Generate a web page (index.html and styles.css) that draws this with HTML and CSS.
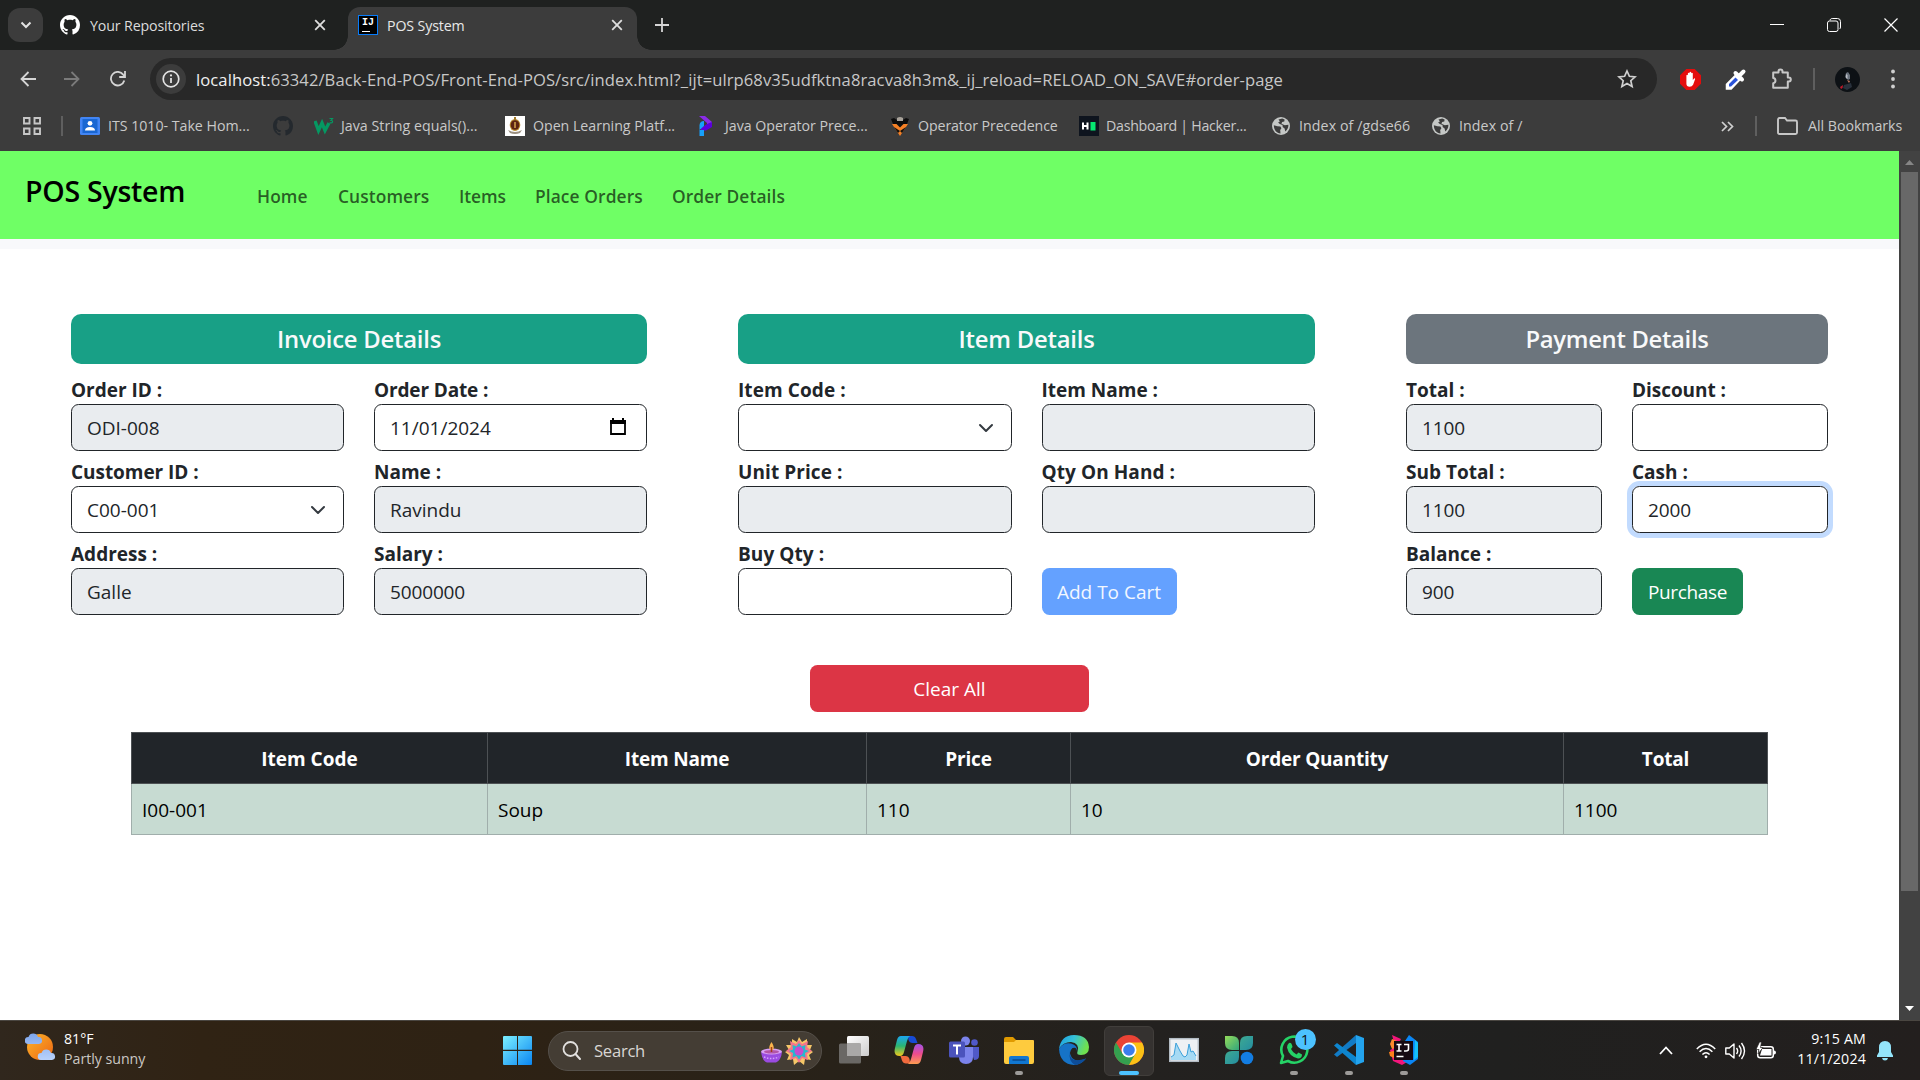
FILE: index.html
```html
<!DOCTYPE html>
<html lang="en">
<head>
<meta charset="utf-8">
<title>POS System</title>
<link rel="stylesheet" href="styles.css">
</head>
<body>
<svg class="defs" width="0" height="0">
  <defs>
    <symbol id="github" viewBox="0 0 16 16"><path d="M8 0C3.58 0 0 3.58 0 8c0 3.54 2.29 6.53 5.47 7.59.4.07.55-.17.55-.38 0-.19-.01-.82-.01-1.49-2.01.37-2.53-.49-2.69-.94-.09-.23-.48-.94-.82-1.13-.28-.15-.68-.52-.01-.53.63-.01 1.08.58 1.23.82.72 1.21 1.87.87 2.33.66.07-.52.28-.87.51-1.07-1.78-.2-3.64-.89-3.64-3.95 0-.87.31-1.59.82-2.15-.08-.2-.36-1.02.08-2.12 0 0 .67-.21 2.2.82.64-.18 1.32-.27 2-.27s1.36.09 2 .27c1.53-1.04 2.2-.82 2.2-.82.44 1.1.16 1.92.08 2.12.51.56.82 1.27.82 2.15 0 3.07-1.87 3.75-3.65 3.95.29.25.54.73.54 1.48 0 1.07-.01 1.93-.01 2.2 0 .21.15.46.55.38A8.01 8.01 0 0 0 16 8c0-4.42-3.58-8-8-8z"/></symbol>
    <symbol id="close" viewBox="0 0 12 12"><path d="M1.2 1.2l9.6 9.6M10.8 1.2l-9.6 9.6" fill="none" stroke="currentColor" stroke-width="1.8"/></symbol>
    <symbol id="globe" viewBox="0 0 20 20"><circle cx="10" cy="10" r="9" fill="#c4c7c5"/><path d="M2.8 9.2l3.6 1.1 3 .2 1 1.8-1.2 1.6.3 3.5c-3.800-.3-6.500-3-6.700-8.200zM7.500 3.400l3.700-.9 2.400 1-.3 1.900-2.200.7-.6 1.600 3.300 1.500 3.600-.5c.1 3.200-1.300 5.300-3.100 6.700l-.7-3-1.900-1.400-.2-2-2.700-.9-1.700-1.600 1.800-1.100z" fill="#3c3c3c"/></symbol>
    <symbol id="chev" viewBox="0 0 16 16"><path d="M2 5l6 6 6-6" fill="none" stroke="#343a40" stroke-width="2" stroke-linecap="round" stroke-linejoin="round"/></symbol>
  </defs>
</svg>

<header class="browser">
  <div class="tabstrip">
    <div class="tab-search"><svg width="12" height="8" viewBox="0 0 12 8"><path d="M1.500 1.500L6 6l4.500-4.500" fill="none" stroke="#e3e3e3" stroke-width="2"/></svg></div>
    <div class="tab">
      <svg class="fav" fill="#fff"><use href="#github"/></svg>
      <span class="tab-title">Your Repositories</span>
      <svg class="x"><use href="#close"/></svg>
    </div>
    <div class="tab active">
      <span class="fav ij"><b>IJ</b></span>
      <span class="tab-title">POS System</span>
      <svg class="x"><use href="#close"/></svg>
    </div>
    <svg class="plus" width="14" height="14" viewBox="0 0 14 14"><path d="M7 0v14M0 7h14" stroke="#d5d5d5" stroke-width="1.800"/></svg>
    <div class="winctl">
      <svg width="14" height="14" viewBox="0 0 14 14"><path d="M0 6.500h14" stroke="#fff"/></svg>
      <svg width="14" height="14" viewBox="0 0 14 14" fill="none" stroke="#fff"><rect x=".5" y="3" width="10.500" height="10.500" rx="2"/><path d="M3 2.500C3.200 1.200 4 .5 5.200.5H10.500Q13.500.5 13.500 3.500V9Q13.500 10.500 12.500 11"/></svg>
      <svg width="14" height="14" viewBox="0 0 14 14"><path d="M.5.5l13 13M13.500.5l-13 13" stroke="#fff" stroke-width="1.200"/></svg>
    </div>
  </div>

  <div class="toolbar">
    <svg class="back" width="16" height="16" viewBox="0 0 16 16"><path d="M8.500 1L1.500 8l7 7M2 8h14" fill="none" stroke="#d5d5d5" stroke-width="1.800"/></svg>
    <svg class="fwd" width="16" height="16" viewBox="0 0 16 16"><path d="M7.500 1l7 7-7 7M14 8H0" fill="none" stroke="#7b7b7b" stroke-width="1.800"/></svg>
    <svg class="reload" width="16" height="16" viewBox="0 0 16 16"><path d="M14.300 9.500A6.800 6.800 0 1 1 13.200 3.600L15 5.500M15 0v6H9.200" fill="none" stroke="#d5d5d5" stroke-width="1.800"/></svg>
    <div class="omnibox">
      <span class="info"><svg width="18" height="18" viewBox="0 0 18 18"><circle cx="9" cy="9" r="7.800" fill="none" stroke="#e3e3e3" stroke-width="1.700"/><path d="M9 8v5" stroke="#e3e3e3" stroke-width="1.800"/><circle cx="9" cy="5.400" r="1.100" fill="#e3e3e3"/></svg></span>
      <span class="url"><em>localhost:</em>63342/Back-End-POS/Front-End-POS/src/index.html?_ijt=ulrp68v35udfktna8racva8h3m&amp;_ij_reload=RELOAD_ON_SAVE#order-page</span>
      <svg width="20" height="20" viewBox="0 0 20 20"><path d="M10 2l2.400 5.300 5.700.6-4.300 3.800 1.300 5.700L10 14.400l-5.100 3 1.300-5.700L1.900 7.900l5.700-.6z" fill="none" stroke="#d0d0d0" stroke-width="1.700"/></svg>
    </div>
    <svg class="adblock" width="21" height="21" viewBox="0 0 21 21"><path d="M6.300 0h8.400L21 6.300v8.400L14.700 21H6.300L0 14.700V6.300z" fill="#e40d0d"/><path d="M6.400 12.500V6.300q.8-1 1.500 0V9V4.200q.8-1 1.600 0V8.500V3.200q.9-1 1.700 0V8.500V4.200q.8-1 1.600 0V11l1.300-1.600q1.200-.2 1 .8l-2 5.500q-1 2-3.400 2-3.300 0-3.300-3z" fill="#fff"/></svg>
    <svg class="pipette" width="22" height="22" viewBox="0 0 22 22"><path d="M12.500 6L2 16.500V20.500H6L16 10" fill="#fff" stroke="#fff" stroke-width="2.500"/><path d="M10.500 9.500L4 16v2.500h2L13 12z" fill="#2952d9"/><path d="M10.500 5l6.500 6.500M14 8l4.500-4.500" stroke="#fff" stroke-width="4" stroke-linecap="round"/></svg>
    <svg class="puzzle" width="22" height="22" viewBox="0 0 22 22"><path d="M2.200 4.500H7.500V3.500a2 2 0 0 1 4 0v1h5.300v5h1a2 2 0 0 1 0 4h-1v6.300H2.200v-4.600c3-.3 3-5 0-5.300z" fill="none" stroke="#c7c7c7" stroke-width="2" stroke-linejoin="round"/></svg>
    <i class="sep"></i>
    <svg class="avatar" width="25" height="25" viewBox="0 0 25 25"><circle cx="12.500" cy="12.500" r="12.500" fill="#0d1115"/><path d="M11 6l2-1 2 3v4l-2 1-3-3z" fill="#68717c"/><path d="M11 7l1.500 1v4l-1.500-1z" fill="#b9bec5"/><path d="M12 13l3 1-1 2z" fill="#c27a62"/><path d="M9 18l7-2 1 4-5 3-4-2z" fill="#29313c"/><path d="M5 20l3-2-.5 3-1.500 1z" fill="#c3182a"/></svg>
    <svg class="dots" width="4" height="20" viewBox="0 0 4 20" fill="#d0d0d0"><circle cx="2" cy="2.500" r="1.900"/><circle cx="2" cy="10" r="1.900"/><circle cx="2" cy="17.500" r="1.900"/></svg>
  </div>

  <div class="bookmarks">
    <svg class="apps" width="18" height="18" viewBox="0 0 18 18" fill="none" stroke="#c7c7c7" stroke-width="1.900"><path d="M1 1h5.500v5.500H1zM11.500 1H17v5.500h-5.500zM1 11.500h5.500V17H1zM11.500 11.500H17V17h-5.500z"/></svg>
    <i class="sep"></i>
    <div class="marks">
      <div class="mark"><svg class="fav" viewBox="0 0 20 20"><rect y="1" width="20" height="18" rx="1.500" fill="#4285f4"/><rect x="2.500" y="3" width="15" height="14" fill="#1967d2"/><circle cx="10" cy="7.300" r="2.400" fill="#fff"/><path d="M5 14.500q0-3.500 5-3.500t5 3.500z" fill="#fff"/></svg><span>ITS 1010- Take Hom...</span></div>
      <div class="mark"><svg class="fav" fill="#24292e"><use href="#github"/></svg></div>
      <div class="mark w3"><svg class="fav" viewBox="0 0 20 20" fill="none" stroke="#059862"><path d="M1 5l3.500 9.500L8 7l3 7.500L15 7" stroke-width="3.400"/><path d="M15.500 2.500h3l-1.500 2q2 0 1.500 1.500t-3 .7" stroke-width="1.200"/></svg><span>Java String equals()...</span></div>
      <div class="mark"><svg class="fav" viewBox="0 0 20 20"><path fill="#fff" d="M0 0h20v20H0z"/><ellipse cx="10" cy="9" rx="5.300" ry="6" fill="#b98b2e"/><ellipse cx="10" cy="9" rx="4.300" ry="4.800" fill="#5d2413"/><path d="M9 6h2v6H9z" fill="#b5853f"/><path d="M9 1h2v3H9z" fill="#a47b2a"/><path d="M3 14q7 4 14 0l-2 3q-5 2-10 0z" fill="#9a8f80"/></svg><span>Open Learning Platf...</span></div>
      <div class="mark"><svg class="fav" viewBox="0 0 20 20"><path d="M2 0h6l7 6-1 4-4 1V7z" fill="#8a2be8"/><path d="M10 8l5-2v5L9 14.500H4V12z" fill="#5b00dc"/><path d="M2.500 9Q3 5 7 5v5l-4.500 4zM2.500 14H7v6H2.500z" fill="#18a0fb"/></svg><span>Java Operator Prece...</span></div>
      <div class="mark"><svg class="fav" viewBox="0 0 20 20"><path d="M1 3l3-1 3 2h6l3-2 3 1-2 5H3z" fill="#0c0c0c"/><path d="M7 2q3-2 6 0v3H7z" fill="#a8a29a"/><path d="M2 8h16l-8 12z" fill="#f58025"/><path d="M6.500 8h7L10 11.500zM4 11l6 4-2 2zM16 11l-6 4 2 2z" fill="#111"/></svg><span class="snug">Operator Precedence</span></div>
      <div class="mark hr"><svg class="fav" viewBox="0 0 20 20"><path fill="#0e141e" d="M0 0h20v20H0z"/><path d="M4 6.500v7M8.500 6.500v7M4 10h5" stroke="#fff" stroke-width="2"/><path d="M11.500 6h5v8.500h-5z" fill="#05e770"/></svg><span>Dashboard | Hacker...</span></div>
      <div class="mark"><svg class="fav"><use href="#globe"/></svg><span class="wide">Index of /gdse66</span></div>
      <div class="mark"><svg class="fav"><use href="#globe"/></svg><span class="wide">Index of /</span></div>
    </div>
    <svg class="more" width="13" height="11" viewBox="0 0 13 11"><path d="M1 1l4.500 4.500L1 10M7 1l4.500 4.500L7 10" fill="none" stroke="#d0d0d0" stroke-width="1.700"/></svg>
    <i class="sep"></i>
    <svg class="folder" width="21" height="18" viewBox="0 0 21 18"><path d="M1 3q0-2 1.500-2H8l2 2.500h8.500q1.500 0 1.500 1.500v10.500q0 1.500-1.500 1.500h-16Q1 17 1 15.500z" fill="none" stroke="#c7c7c7" stroke-width="1.900"/></svg>
    <span>All Bookmarks</span>
  </div>
</header>

<div class="viewport">
  <main class="page">
    <nav class="navbar">
      <h1>POS System</h1>
      <ul>
        <li class="n1">Home</li><li class="n2">Customers</li><li class="n3">Items</li><li class="n4">Place Orders</li><li class="n5">Order Details</li>
      </ul>
    </nav>
    <div class="strip"></div>

    <section class="panels">
      <div class="panel">
        <h2>Invoice Details</h2>
        <div class="fields">
          <div class="field"><label>Order ID :</label><div class="input ro">ODI-008</div></div>
          <div class="field"><label class="tight">Order Date :</label><div class="input date">11/01/2024<svg width="18" height="18" viewBox="0 0 18 18"><path d="M4 0v3M14 0v3" stroke="#000" stroke-width="2"/><path d="M2 3h14v13H2z" fill="none" stroke="#000" stroke-width="1.800"/><path d="M1 2h16v4H1z"/></svg></div></div>
          <div class="field"><label class="near">Customer ID :</label><div class="input select">C00-001<svg><use href="#chev"/></svg></div></div>
          <div class="field"><label>Name :</label><div class="input ro">Ravindu</div></div>
          <div class="field"><label>Address :</label><div class="input ro">Galle</div></div>
          <div class="field"><label>Salary :</label><div class="input ro tight">5000000</div></div>
        </div>
      </div>
      <div class="panel">
        <h2>Item Details</h2>
        <div class="fields">
          <div class="field"><label class="wide">Item Code :</label><div class="input select"><svg><use href="#chev"/></svg></div></div>
          <div class="field"><label>Item Name :</label><div class="input ro"></div></div>
          <div class="field"><label class="wide">Unit Price :</label><div class="input ro"></div></div>
          <div class="field"><label class="wide">Qty On Hand :</label><div class="input ro"></div></div>
          <div class="field"><label class="wide">Buy Qty :</label><div class="input"></div></div>
          <div class="field"><button class="btn add">Add To Cart</button></div>
        </div>
      </div>
      <div class="panel pay">
        <h2>Payment Details</h2>
        <div class="fields">
          <div class="field"><label>Total :</label><div class="input ro tight">1100</div></div>
          <div class="field"><label class="near">Discount :</label><div class="input"></div></div>
          <div class="field"><label>Sub Total :</label><div class="input ro tight">1100</div></div>
          <div class="field"><label>Cash :</label><div class="input focus tight">2000</div></div>
          <div class="field"><label>Balance :</label><div class="input ro tight">900</div></div>
          <div class="field"><button class="btn buy">Purchase</button></div>
        </div>
      </div>
    </section>

    <button class="btn clear">Clear All</button>

    <table class="cart">
      <colgroup><col class="c1"><col class="c2"><col class="c3"><col class="c4"><col class="c5"></colgroup>
      <thead><tr><th class="code">Item Code</th><th>Item Name</th><th>Price</th><th>Order Quantity</th><th>Total</th></tr></thead>
      <tbody><tr><td>I00-001</td><td>Soup</td><td>110</td><td>10</td><td>1100</td></tr></tbody>
    </table>
  </main>
  <aside class="scrollbar">
    <svg width="9" height="5" viewBox="0 0 9 5"><path d="M0 5L4.500 0 9 5z" fill="#868686"/></svg>
    <div class="thumb"></div>
    <svg width="9" height="5" viewBox="0 0 9 5"><path d="M0 0l4.500 5L9 0z" fill="#fff"/></svg>
  </aside>
</div>

<footer class="taskbar">
  <div class="weather">
    <svg width="31" height="30" viewBox="0 0 31 30">
      <defs>
        <linearGradient id="sun" x1="0" y1="0" x2="1" y2="1"><stop offset="0" stop-color="#fbb52a"/><stop offset="1" stop-color="#ee6512"/></linearGradient>
        <linearGradient id="cloud" x1="0" y1="0" x2="0" y2="1"><stop offset="0" stop-color="#7ea6ec"/><stop offset="1" stop-color="#b9d2fb"/></linearGradient>
      </defs>
      <circle cx="15" cy="15" r="13" fill="url(#sun)"/>
      <path d="M3 12a3.500 3.500 0 0 1 .5-7 5 5 0 0 1 9.500 0 3.500 3.500 0 0 1 1 7zM16 28a3.500 3.500 0 0 1 .500-7 5 5 0 0 1 9.500 0 3.500 3.500 0 0 1 1 7z" fill="url(#cloud)"/>
    </svg>
    <div><p>81°F</p><p class="dim">Partly sunny</p></div>
  </div>

  <div class="apps-row">
    <svg class="start" width="29" height="29" viewBox="0 0 29 29"><defs><linearGradient id="win" x1="0" y1="0" x2="1" y2="1"><stop offset="0" stop-color="#7cf0ff"/><stop offset="1" stop-color="#0a86f2"/></linearGradient></defs><path d="M1 0h13v13.800H0V1q0-1 1-1zM15 0h13q1 0 1 1v12.800H15zM0 15h14v14H1q-1 0-1-1zM15 15h14v13q0 1-1 1H15z" fill="url(#win)"/></svg>
    <div class="search">
      <svg width="20" height="20" viewBox="0 0 20 20"><circle cx="8.500" cy="8" r="7" fill="none" stroke="#e2e0de" stroke-width="1.800"/><path d="M13.500 13l4.500 5" stroke="#e2e0de" stroke-width="2" stroke-linecap="round"/></svg>
      <span>Search</span>
      <svg width="54" height="30" viewBox="0 0 54 30">
        <path d="M2 16q10.500 4 21 0-1 8.500-6 10.500H8Q3 24.500 2 16z" fill="#9a4be0"/><ellipse cx="12.500" cy="15.500" rx="10.500" ry="3" fill="#d7a0f6"/><ellipse cx="12.500" cy="15.800" rx="7.500" ry="1.800" fill="#b255a8"/><path d="M12.500 6q3 4.500 2 7t-4 0Q9.500 10.500 12.500 6z" fill="#fbb44c"/><path d="M12.500 11v5" stroke="#a33b1d" stroke-width="1.500"/><path d="M5 21q7.500 3 15 0" stroke="#d3a0ff" stroke-dasharray="1.500 1.500" fill="none" stroke-width="1.500"/>
        <path d="M40 1l3 5 5-3 0 6 5 0-2 5 3 2-4 3 2 5-6-1-1 6-5-4-5 4-1-6-6 1 2-5-4-3 4-2-3-5 6 0 0-6 5 3z" fill="#f6c768"/>
        <path d="M40 4l3 4 6-3-1 6 5 4-5 3 1 6-6-2-3 5-3-5-6 2 1-6-5-3 5-4-1-6 6 3z" fill="#f4768a"/>
        <path d="M40 7l2.500 3.500 4-1.500-.5 4.500 4 1.500-4 2 .5 4.500-4-1.500L40 23.500 37.500 20l-4 1.500.5-4.500-4-2 4-1.500-.5-4.500 4 1.500z" fill="#25b8cd"/><circle cx="40" cy="15" r="4.500" fill="#c34bd0"/>
      </svg>
    </div>
    <div class="app"><svg viewBox="0 0 30 30"><defs><linearGradient id="tv" x1="0" y1="0" x2="1" y2="1"><stop offset="0" stop-color="#fff"/><stop offset="1" stop-color="#ccc"/></linearGradient></defs><rect x="8" y="1" width="22" height="20" rx="1.500" fill="url(#tv)"/><rect y="8.500" width="22" height="20" rx="1.500" fill="#6a6865"/><path d="M8 8.500h14V21H8z" fill="#a9a8a7"/></svg></div>
    <div class="app"><svg viewBox="0 0 30 30"><defs><linearGradient id="cp1" x1="0" y1="0" x2="0" y2="1"><stop offset="0" stop-color="#1ca7f2"/><stop offset=".5" stop-color="#2ab673"/><stop offset="1" stop-color="#f2c91a"/></linearGradient><linearGradient id="cp2" x1="0" y1="0" x2="0" y2="1"><stop offset="0" stop-color="#a252e8"/><stop offset=".5" stop-color="#ee4c8c"/><stop offset="1" stop-color="#fd9d51"/></linearGradient></defs><path d="M14 1h4q3 0 4 3l1.500 4h-5q-3 0-4-3z" fill="#174bd6"/><path d="M7 1h9q-2 1-3 5l-3 11q-1 4-4 4-7 0-5-8l2-8q1-4 4-4z" fill="url(#cp1)"/><path d="M16 28.500h-4q-3 0-4-3L6.500 21h5q3 0 4 3z" fill="#f06a3d"/><path d="M23 29h-9q2-1 3-5l3-11q1-4 4-4 7 0 5 8l-2 8q-1 4-4 4z" fill="url(#cp2)"/></svg></div>
    <div class="app"><svg viewBox="0 0 30 30"><circle cx="25.500" cy="7.500" r="3.300" fill="#5059c9"/><path d="M21 12h9v9q0 4-5 4z" fill="#5059c9"/><circle cx="16.500" cy="6" r="4.500" fill="#7b83eb"/><path d="M10 12h14v10q0 7-7 7t-7-7z" fill="#7b83eb"/><rect y="6.500" width="16" height="16" rx="1.500" fill="#4b53bc"/><path d="M4 10.500h8M8 10.500v9" stroke="#fff" stroke-width="2"/></svg></div>
    <div class="app run"><svg viewBox="0 0 30 30"><path d="M0 4q0-2 2-2h7l4 4h-2v6H0z" fill="#e09a00"/><path d="M0 7h10l2-2h17q1 0 1 1v21q0 2-2 2H2q-2 0-2-2z" fill="#fecb3e"/><path d="M5 29v-6q0-2 2-2h16q2 0 2 2v6z" fill="#1177d1"/><path d="M9 25h12" stroke="#0a4a8c" stroke-width="1.500" stroke-linecap="round"/></svg></div>
    <div class="app"><svg viewBox="0 0 30 30"><defs><linearGradient id="e1" x1="0" y1="0" x2="1" y2=".3"><stop offset="0" stop-color="#1b9de2"/><stop offset=".5" stop-color="#35c1d8"/><stop offset="1" stop-color="#6fe04f"/></linearGradient></defs><path d="M0 14Q2 0 15 0q14 0 15 12 0 8-8 8-5 0-3.500-3.500Q21 8 12 7 4 7 0 14z" fill="url(#e1)"/><path d="M0 14Q4 7 12 8.500q7 2 6 8 0-5-4.500-3.500Q9 17 13 23q5 5 14 .5Q22 30 15 30 1 29 0 14z" fill="#1673c7"/><path d="M11 16q-2 13 16 7.500Q22 30 16 30 9 26 11 16z" fill="#0d4c98"/></svg></div>
    <div class="app current"><svg viewBox="0 0 30 30"><circle cx="15" cy="15" r="15" fill="#ea4335"/><path d="M2 7.500A15 15 0 0 0 15 30l7-11.500H8.500z" fill="#34a04f"/><path d="M15 30a15 15 0 0 0 13-22.500H15l6.500 11z" fill="#fbc116"/><circle cx="15" cy="15" r="7.500" fill="#fff"/><circle cx="15" cy="15" r="5.800" fill="#3b7ded"/></svg></div>
    <div class="app"><svg viewBox="0 0 30 30"><rect x=".7" y="3.700" width="28.600" height="22.600" fill="#eef1f4" stroke="#b3bcc4" stroke-width="1.500"/><path d="M2 22l3-2 2-12 2 4 2 4 3 5 2 1 2-2 2-11 2 8 2-1 3 5v4H2z" fill="#a6daf4"/><path d="M2 22l3-2 2-12 2 4 2 4 3 5 2 1 2-2 2-11 2 8 2-1 3 5" fill="none" stroke="#3aa0da"/></svg></div>
    <div class="app"><svg viewBox="0 0 30 30"><defs><linearGradient id="g1" x1="0" y1="0" x2="1" y2="1"><stop offset="0" stop-color="#94dc5a"/><stop offset="1" stop-color="#31a47c"/></linearGradient><linearGradient id="g2" x1="0" y1="0" x2="1" y2="1"><stop offset="0" stop-color="#4cb98a"/><stop offset="1" stop-color="#177fa8"/></linearGradient></defs><path d="M1 1h7q7 0 7 7v7H8q-7 0-7-7z" fill="url(#g1)"/><path d="M29 1v7q0 7-7 7h-6V8q0-7 7-7zM1 29v-6q0-7 7-7h7v6q0 7-7 7z" fill="url(#g2)"/><circle cx="23" cy="23" r="6.300" fill="#137de2"/></svg></div>
    <div class="app run"><svg viewBox="0 0 30 30"><path d="M2 28l2-7a13 13 0 1 1 5 5z" fill="#25221f" stroke="#25d366" stroke-width="2.600" stroke-linejoin="round"/><path d="M10 8q2-1 3 2l.5 2-1.500 2q2 4 5.500 5.500l2-2 3.500 2q0 4-4 4-9-2-11-11Q8 9.500 10 8z" fill="#25d366"/></svg><b class="badge">1</b></div>
    <div class="app run"><svg viewBox="0 0 30 30"><path d="M22 0l8 3v24l-8 3z" fill="#23a4ee"/><path d="M22 0L0 19.500 3 22 22 8z" fill="#127bc5"/><path d="M22 30L0 10.500 3 8l19 14z" fill="#0e86cf"/></svg></div>
    <div class="app run"><svg viewBox="0 0 30 30"><path d="M3 0l9 4-5 10z" fill="#f3157b"/><path d="M3 4l5 2v18l-6-5 1-5-2-5z" fill="#fd8a2c"/><path d="M1 15l9-4 8 16-5 3-9-4z" fill="#f3157b"/><path d="M0 17l5-1v7l-4-2z" fill="#fc801d"/><path d="M16 6L20 0l9 7 0 17-8 6-7-4z" fill="#0a86f5"/><path d="M21 0l5 5-1 20 4-3V8z" fill="#15c1fa"/><path d="M5 6h19v19H5z" fill="#160a12"/><path d="M7.500 9.500h5M10 9.500V16M7.500 16h5M15 9.500h4.500V14q0 2-2.500 2h-2M7.500 21.500h7" stroke="#fff" stroke-width="1.600" fill="none"/></svg></div>
  </div>

  <div class="tray">
    <svg width="14" height="9" viewBox="0 0 14 9"><path d="M1 8l6-6.500L13 8" fill="none" stroke="#fff" stroke-width="1.800"/></svg>
    <svg class="wifi" width="20" height="16" viewBox="0 0 20 16" fill="none" stroke="#fff" stroke-width="1.500"><path d="M.8 6q9.200-9.500 18.400 0M3.600 8.800q6.400-6.500 12.800 0M6.400 11.500q3.600-3.600 7.200 0"/><circle cx="10" cy="13.800" r="1.400" fill="#fff" stroke="none"/></svg>
    <svg class="vol" width="21" height="18" viewBox="0 0 21 18" fill="none" stroke="#fff" stroke-width="1.400" stroke-linejoin="round"><path d="M.8 6v6h3.500L9 16V2L4.300 6zM11.500 6q2.300 3 0 6M14 3.500q4.200 5.500 0 11M16.500 1q6 8 0 16"/></svg>
    <svg class="bat" width="21" height="18" viewBox="0 0 21 18"><rect x="1.700" y="4.700" width="15.600" height="11" rx="2.500" fill="none" stroke="#fff" stroke-width="1.500"/><path d="M6 7h9.500v6.500H4z" fill="#fff"/><path d="M18 8.500q2 0 2 2t-2 2z" fill="#fff"/><path d="M3.500 0L0 7.500h3L2 12l5-6.500H4.500L5.500 0z" fill="#fff" stroke="#23201e" stroke-width=".7"/></svg>
    <div class="clock"><p>9:15 AM</p><p>11/1/2024</p></div>
    <svg class="bell" width="16" height="20" viewBox="0 0 16 20"><path d="M8 0q6 0 6 6.500V11l2 3.500V16H0v-1.500L2 11V6.500Q2 0 8 0zM5 17h6q-.5 2.500-3 2.500T5 17z" fill="#94e5fb"/></svg>
  </div>
</footer>
</body>
</html>
```
FILE: styles.css
```css
* { box-sizing: border-box; margin: 0; padding: 0; }
body {
  width: 1920px; height: 1080px; overflow: hidden;
  display: flex; flex-direction: column;
  font-family: "Open Sans", sans-serif; background: #fff;
}
svg { display: block; flex: none; }
.defs { position: absolute; }
p, span { white-space: nowrap; }

/* Browser chrome */
.browser { height: 151px; background: #3c3c3c; color: #dcdcdc; font-size: 14.2px; }
.tabstrip { height: 50px; background: #1f2120; display: flex; align-items: center; padding-left: 8px; }
.tab-search { width: 35px; height: 34px; border-radius: 12px; background: #3c3c3c; display: grid; place-items: center; }
.tab { width: 305px; height: 43px; margin-top: 7px; padding: 0 22px 7px 17px; display: flex; align-items: center; gap: 10px; letter-spacing: -.13px; }
.tab.active { position: relative; width: 289px; padding: 0 14px 7px 10px; background: #3c3c3c; border-radius: 12px 12px 0 0; color: #e8e8e8; }
.tab.active::before, .tab.active::after { content: ""; position: absolute; bottom: 0; width: 14px; height: 14px; }
.tab.active::before { left: -14px; background: radial-gradient(circle at 0 0, transparent 13.5px, #3c3c3c 14px); }
.tab.active::after { right: -14px; background: radial-gradient(circle at 100% 0, transparent 13.5px, #3c3c3c 14px); }
.tab-title { flex: 1; }
.active .tab-title { margin-left: -1px; }
.fav { width: 20px; height: 20px; flex: none; }
.ij { background: #000; border: 1px solid #087cfa; color: #fff; font: 700 10px/11px "Liberation Mono", monospace; padding: 1px 3px; }
.ij b { display: block; width: 8px; height: 15px; border-bottom: 1.5px solid #fff; letter-spacing: 0; }
.x { width: 12px; height: 12px; color: #dedede; }
.plus { margin-left: 18px; }
.winctl { margin-left: auto; margin-right: 22px; display: flex; gap: 43px; }

.toolbar { height: 58px; display: flex; align-items: center; padding-left: 20px; }
.fwd { margin-left: 28px; }
.reload { margin-left: 30px; }
.omnibox { width: 1507px; height: 42px; margin-left: 24px; border-radius: 21px; background: #282828; display: flex; align-items: center; padding: 0 20px 0 6px; }
.info { width: 30px; height: 30px; border-radius: 50%; background: #3c3c3c; display: grid; place-items: center; }
.url { flex: 1; margin-left: 10px; font-size: 16.6px; letter-spacing: .075px; color: #c7c7c7; }
.url em { font-style: normal; color: #f0f0f0; }
.adblock { margin-left: 23px; }
.pipette { margin-left: 24px; }
.puzzle { margin-left: 24px; }
.sep { width: 2px; height: 20px; background: #5f5f5f; }
.puzzle + .sep { height: 22px; margin-left: 20px; }
.avatar { margin-left: 20px; }
.dots { margin-left: 31px; }

.bookmarks { height: 36px; display: flex; align-items: center; padding-left: 23px; color: #c9c9c9; }
.bookmarks span { padding-bottom: 2px; letter-spacing: -.02px; }
.apps + .sep { margin-left: 20px; }
.marks { display: grid; grid-template-columns: 193px 41px 191px 192px 193px 189px 192px 160px 120px; margin-left: 17px; }
.mark { display: flex; align-items: center; gap: 8px; height: 20px; }
.bookmarks .w3 span { margin-left: -1px; letter-spacing: .03px; }
.bookmarks .hr span { margin-left: -1px; letter-spacing: -.26px; }
.bookmarks .snug { letter-spacing: -.1px; }
.bookmarks .wide { letter-spacing: .08px; }
.more { margin-left: 170px; }
.more + .sep { margin-left: 21px; }
.folder { margin: 0 10px 0 20px; }

/* Page */
.viewport { height: 869px; display: flex; }
.page { width: 1899px; background: #fff; color: #212529; }
.navbar { height: 88px; background: #6fff65; display: flex; padding-left: 25px; }
.navbar h1 { width: 232px; font-size: 28.5px; font-weight: 600; line-height: 40px; padding-top: 20px; color: #000; letter-spacing: -.25px; }
.navbar ul { list-style: none; display: flex; font-size: 17.4px; font-weight: 600; line-height: 30px; padding-top: 30px; color: rgba(0,0,0,.65); letter-spacing: .08px; }
.n1 { width: 81px; }
.n2 { width: 121px; }
.n3 { width: 76px; letter-spacing: -.1px; }
.n4 { width: 137px; }
.strip { height: 10px; background: #f8f9fb; }

.panels { display: grid; grid-template-columns: 576px 577px 422px; column-gap: 91px; padding: 65px 0 0 71px; }
.panel h2 { height: 50px; border-radius: 10px; background: #18a086; color: #f8f9fa; text-align: center; font-size: 23.8px; font-weight: 600; line-height: 51px; letter-spacing: -.2px; }
.pay h2 { background: #6c757d; letter-spacing: -.3px; }
.fields { margin-top: 10px; display: grid; grid-template-columns: 1fr 1fr; column-gap: 30px; row-gap: 5px; }
.field { height: 77px; display: flex; flex-direction: column; justify-content: flex-end; align-items: flex-start; }
.field label { height: 30px; line-height: 33px; font-size: 19px; font-weight: 700; }
.field label.wide { letter-spacing: .08px; }
.tight { letter-spacing: -.14px; }
.near { letter-spacing: -.05px; }
.input { width: 100%; height: 47px; border: 1px solid #212529; border-radius: 7.5px; padding: 0 15px; font-size: 19px; line-height: 46px; display: flex; align-items: center; justify-content: space-between; }
.ro { background: #e9ecef; }
.date { padding-right: 19px; }
.date svg { margin-bottom: 2px; }
.select svg { width: 16px; height: 16px; margin: 0 2px 0 auto; }
.focus { box-shadow: 0 0 0 5px #c2dbfe; }
.btn { height: 47px; border: 0; border-radius: 7.5px; padding: 1px 15px 0; color: #fff; font: 19px/46px "Open Sans", sans-serif; white-space: nowrap; }
.add { width: 135px; background: #64a1ff; color: #f2f7ff; }
.buy { width: 111px; background: #198754; letter-spacing: -.35px; }
.clear { display: block; width: 279px; margin: 50px auto 20px; background: #dc3545; }

.cart { width: 1637px; margin: 0 auto; border-collapse: collapse; table-layout: fixed; font-size: 19px; }
.cart th, .cart td { height: 51px; padding: 2px 10px 0; border: 1px solid #a0aeab; line-height: 48px; }
.cart th { background: #212529; color: #fff; border-color: #4d5154; font-size: 19px; letter-spacing: -.2px; }
.cart th.code { letter-spacing: 0; }
.cart td { background: #c7dbd2; color: #000; text-align: left; }
.c1 { width: 356px; }
.c2 { width: 379px; }
.c3 { width: 204px; }
.c4 { width: 493px; }
.c5 { width: 204px; }

.scrollbar { width: 21px; background: #424242; display: flex; flex-direction: column; align-items: center; justify-content: space-between; padding: 9px 0; }
.thumb { width: 17px; height: 719px; background: #686868; margin-bottom: auto; margin-top: 7px; }

/* Taskbar */
.taskbar { height: 60px; border-top: 1px solid #4a4641; background: linear-gradient(90deg, #30271d 0, #302314 200px, #2e2214 480px, #282219 830px, #23211f 1150px, #20201f 1500px, #231f1e 1920px); color: #fff; display: flex; align-items: center; padding-left: 25px; font-size: 14.2px; }
.weather { width: 478px; display: flex; align-items: flex-start; gap: 8px; line-height: 20px; margin-top: -3px; }
.weather svg { margin-top: 3px; }
.weather p { letter-spacing: -.02px; }
.dim { color: #cbc8c4; }
.apps-row { display: flex; align-items: center; height: 59px; }
.search { width: 274px; height: 40px; margin: 0 4.5px 0 16px; border-radius: 20px; border: 1px solid #55504a; background: #443d34; display: flex; align-items: center; padding: 0 8px 0 13px; font-size: 16.6px; color: #d9d6d3; letter-spacing: -.25px; }
.search span { flex: 1; margin-left: 12px; }
.app { position: relative; width: 55px; height: 50px; display: grid; place-items: center; }
.app > svg { width: 30px; height: 30px; margin-bottom: 2px; }
.run::after, .current::after { content: ""; position: absolute; left: 23px; bottom: 1px; width: 8px; height: 4px; border-radius: 2px; background: #9d9b99; }
.current { background: #353230; border: 1px solid #413e3b; border-radius: 6px; width: 50px; margin: 0 2.5px; }
.current::after { left: 14px; bottom: 0; width: 20px; background: #4cc2ff; }
.badge { position: absolute; left: 28px; top: 3px; width: 21px; height: 21px; border-radius: 50%; background: #4cc2ff; color: #111; font: 400 15px/20px "Open Sans", sans-serif; text-align: center; }
.tray { margin-left: auto; margin-right: 27px; display: flex; align-items: center; }
.wifi { margin-left: 23px; }
.vol { margin-left: 9px; }
.bat { margin-left: 10px; }
.clock { width: 89px; text-align: right; line-height: 20px; letter-spacing: .18px; margin-top: -3px; }
.bell { margin-left: 11px; }
```
